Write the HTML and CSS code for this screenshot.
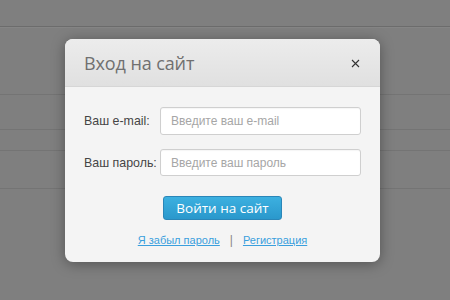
FILE: index.html
```html
<!DOCTYPE html>
<html lang="ru">
<head>
<meta charset="utf-8">
<link rel="stylesheet" href="styles.css">
</head>
<body>
<div class="page">
  <div class="row r1"></div>
  <div class="row r2"></div>
  <div class="row r3"></div>
  <div class="row r4"></div>
  <div class="row r5"></div>
</div>
<div class="overlay">
  <div class="modal">
    <div class="modal-head">
      <h1 class="title">Вход на сайт</h1>
      <svg class="close" width="9" height="9" viewBox="0 0 9 9"><path d="M1 1L8 8M8 1L1 8" stroke="#333" stroke-width="1.1" fill="none"/></svg>
    </div>
    <div class="modal-body">
      <div class="form">
        <label class="label">Ваш e-mail:</label>
        <div class="input">Введите ваш e-mail</div>
        <label class="label">Ваш пароль:</label>
        <div class="input">Введите ваш пароль</div>
      </div>
      <div class="actions"><span class="btn">Войти на сайт</span></div>
      <div class="links">
        <a class="link">Я забыл пароль</a>
        <span class="sep">|</span>
        <a class="link">Регистрация</a>
      </div>
    </div>
  </div>
</div>
</body>
</html>
```
FILE: styles.css
```css
html, body { margin: 0; padding: 0; }
body {
  width: 450px; height: 300px; overflow: hidden;
  background: #7f7f7f;
  position: relative;
  font-family: "Liberation Sans", Arial, sans-serif;
}
.page { display: flex; flex-direction: column; }
.row { border-bottom: 1px solid #747474; }
.r1 { height: 26px; border-bottom: 1px solid #6c6c6c; box-shadow: 0 1px 0 #858585; }
.r2 { height: 67px; }
.r3 { height: 34px; }
.r4 { height: 20px; }
.r5 { height: 37px; }
.overlay {
  position: absolute; left: 0; top: 0; width: 450px; height: 300px;
}
.modal {
  position: absolute; left: 65px; top: 39px;
  width: 315px; height: 223px;
  border-radius: 8px;
  background: #f4f4f4;
  box-shadow: 0 2px 14px rgba(0,0,0,0.35);
  overflow: hidden;
  display: flex; flex-direction: column;
}
.modal-head {
  height: 47px;
  background: linear-gradient(#ececec, #e0e0e0);
  border-bottom: 1px solid #d6d6d6;
  display: flex; align-items: center; justify-content: space-between;
  padding: 0 19px;
}
.title {
  margin: 0;
  font-family: "Open Sans", sans-serif;
  font-weight: 400;
  font-size: 18px;
  color: #707070;
  letter-spacing: -0.1px;
}
.close { display: block; margin-right: 1px; margin-top: 1px; }
.modal-body { padding: 20px 19px 0 19px; }
.form {
  display: grid;
  grid-template-columns: 76px 1fr;
  row-gap: 14px;
  align-items: center;
}
.label { font-size: 12.4px; color: #454545; }
.input {
  box-sizing: border-box; height: 28px;
  border: 1px solid #cfcfcf; border-radius: 3px;
  background: #fff;
  font-size: 12px; color: #a6a6a6;
  display: flex; align-items: center; padding-left: 10px;
  box-shadow: inset 0 1px 1px rgba(0,0,0,0.04);
}
.form .input:nth-of-type(2) { height: 27px; }
.actions { display: flex; justify-content: center; margin-top: 20px; }
.btn {
  box-sizing: border-box; width: 119px; height: 24px;
  border: 1px solid #2a86b8; border-radius: 3px;
  background: linear-gradient(#3cb0e0, #2a98cc);
  color: #fff; font-family: "Open Sans", sans-serif; font-size: 13.5px; font-weight: 500;
  display: flex; align-items: center; justify-content: center;
}
.links {
  display: flex; justify-content: center; align-items: center; gap: 10px;
  margin-top: 13px; font-size: 11px;
}
.link { color: #3a9fdd; text-decoration: underline; }
.sep { color: #888; font-size: 12px; }
```
